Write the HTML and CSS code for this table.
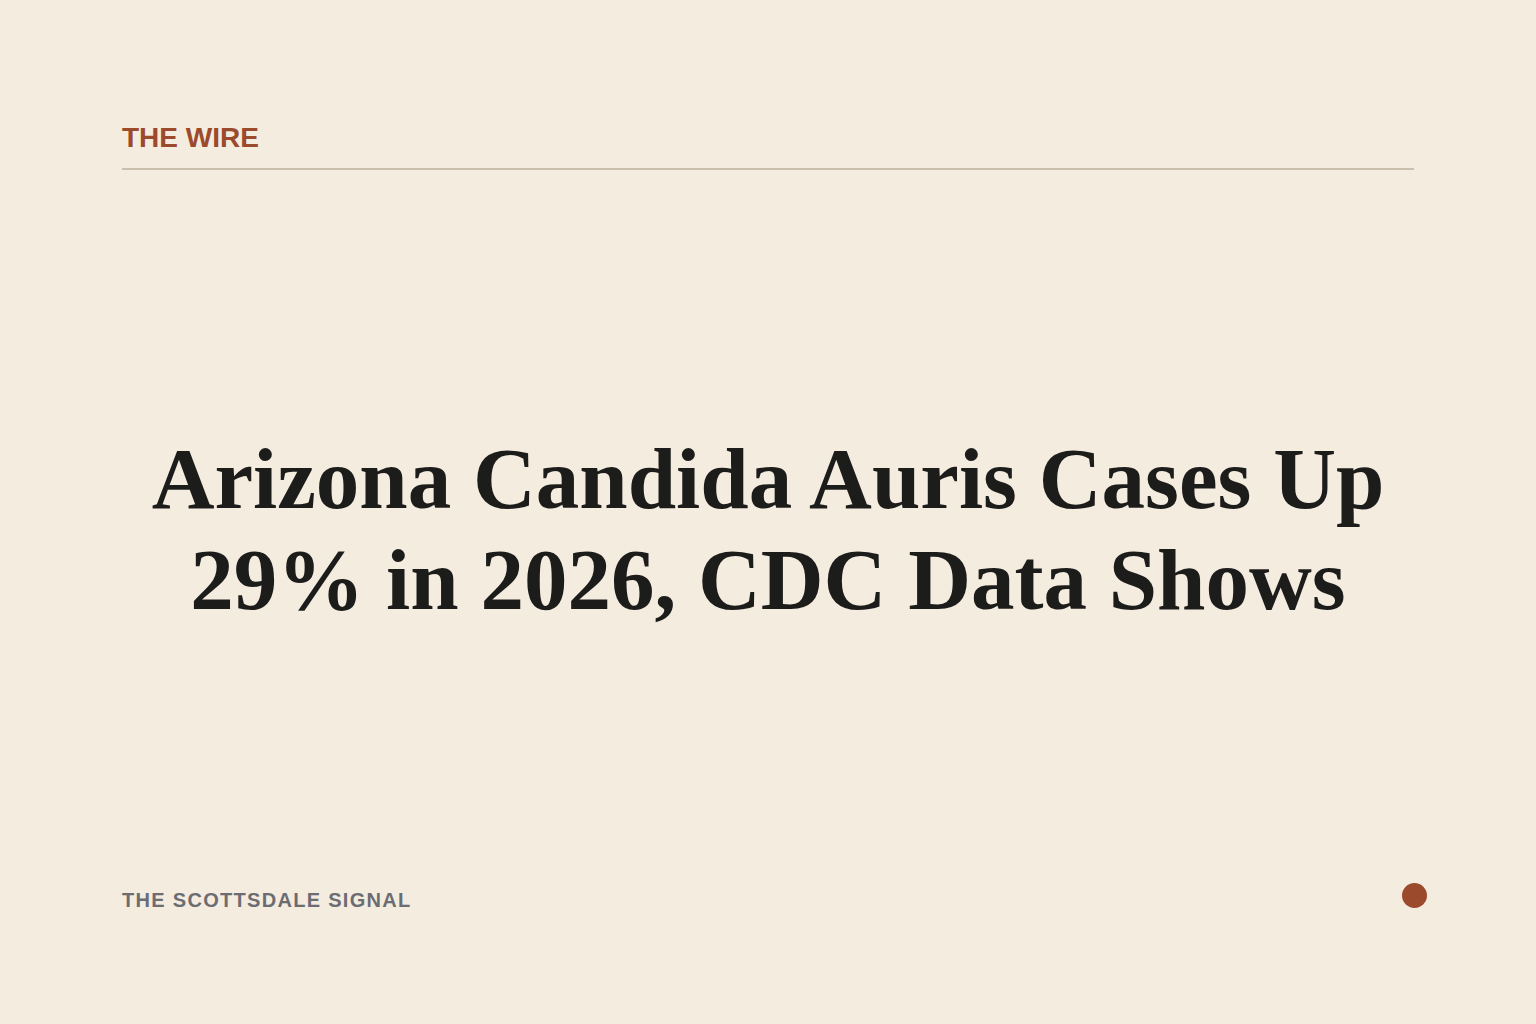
FILE: index.html
```html
<!DOCTYPE html>
<html lang="en">
<head>
<meta charset="utf-8">
<title>The Wire</title>
<link rel="stylesheet" href="styles.css">
</head>
<body>
<div class="page">
  <header class="top">
    <div class="kicker">THE WIRE</div>
  </header>
  <main class="main">
    <h1 class="headline">Arizona Candida Auris Cases Up 29% in 2026, CDC Data Shows</h1>
  </main>
  <footer class="foot">
    <div class="brand">THE SCOTTSDALE SIGNAL</div>
    <div class="dot"></div>
  </footer>
</div>
</body>
</html>
```
FILE: styles.css
```css
html, body {
  margin: 0;
  padding: 0;
  background: #f5ece0;
}
.page {
  box-sizing: border-box;
  height: 1024px;
  padding: 122px 122px 112px;
  display: flex;
  flex-direction: column;
}
.top {
  border-bottom: 2px solid #cbbfad;
  padding-bottom: 14px;
}
.kicker {
  font-family: "Liberation Sans", Arial, sans-serif;
  font-weight: 700;
  font-size: 28px;
  line-height: 32px;
  color: #9c4a2c;
}
.main {
  flex: 1;
  display: flex;
  align-items: center;
  justify-content: center;
}
.headline {
  margin: 0;
  font-family: "Liberation Serif", "Times New Roman", serif;
  font-weight: 700;
  font-size: 87px;
  line-height: 101px;
  color: #1c1c1b;
  text-align: center;
  max-width: 1260px;
}
.foot {
  display: flex;
  justify-content: space-between;
  align-items: flex-start;
}
.brand {
  font-family: "Liberation Sans", Arial, sans-serif;
  font-weight: 700;
  font-size: 20px;
  line-height: 24px;
  letter-spacing: 0.065em;
  color: #6b6d73;
}
.dot {
  width: 25px;
  height: 25px;
  border-radius: 50%;
  background: #9c4a2c;
  margin-top: -5px;
  margin-right: -13px;
}
```
